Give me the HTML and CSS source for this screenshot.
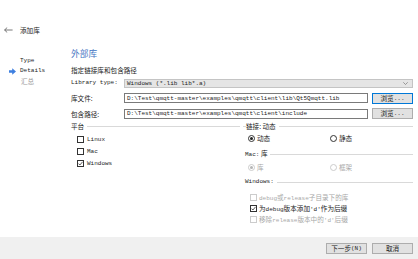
FILE: index.html
```html
<!DOCTYPE html>
<html>
<head>
<meta charset="utf-8">
<link rel="stylesheet" href="styles.css">
</head>
<body>
<div class="header">
  <svg class="back" width="9" height="6" viewBox="0 0 9 6"><path d="M0.6 3H8.6M3.2 0.5L0.6 3L3.2 5.5" fill="none" stroke="#555" stroke-width="0.8"/></svg>
  <span>添加库</span>
</div>
<div class="content">
  <div class="nav">
    <div class="nav-item"><span class="l">Type</span></div>
    <div class="nav-item active"><svg class="cur" width="7" height="7" viewBox="0 0 7 7"><path d="M0 2.2H3.2V0.2L7 3.5L3.2 6.8V4.8H0Z" fill="#3d7fe0"/></svg><span class="l">Details</span></div>
    <div class="nav-item muted">汇总</div>
  </div>
  <div class="main">
    <div class="title">外部库</div>
    <div class="subtitle">指定链接库和包含路径</div>
    <div class="form">
      <span class="label l">Library type:</span>
      <div class="combo"><span class="l">Windows (*.lib lib*.a)</span><svg class="chev" width="5" height="3" viewBox="0 0 5 3"><path d="M0.3 0.3L2.5 2.5L4.7 0.3" fill="none" stroke="#777" stroke-width="0.7"/></svg></div>
      <span class="label">库文件:</span>
      <div class="input l">D:\Test\qmqtt-master\examples\qmqtt\client\lib\Qt5Qmqtt.lib</div>
      <div class="btn focus">浏览<span class="l">...</span></div>
      <span class="label">包含路径:</span>
      <div class="input l">D:\Test\qmqtt-master\examples\qmqtt\client\include</div>
      <div class="btn">浏览<span class="l">...</span></div>
    </div>
    <div class="groups">
      <div class="group left">
        <div class="ghead"><span>平台</span><span class="line"></span></div>
        <div class="checks">
          <div class="check"><span class="cb"></span><span class="l">Linux</span></div>
          <div class="check"><span class="cb"></span><span class="l">Mac</span></div>
          <div class="check"><span class="cb"><svg width="5" height="5" viewBox="0 0 5 5"><path d="M0.5 2.6L1.9 4L4.6 0.8" fill="none" stroke="#333" stroke-width="0.8"/></svg></span><span class="l">Windows</span></div>
        </div>
      </div>
      <div class="group right">
        <div class="ghead"><span class="lead"></span><span>链接: 动态</span><span class="line"></span></div>
        <div class="radios r1">
          <div class="radio"><span class="rb on"></span><span>动态</span></div>
          <div class="radio"><span class="rb"></span><span>静态</span></div>
        </div>
        <div class="ghead sub h2"><span><span class="l">Mac:</span> 库</span><span class="line"></span></div>
        <div class="radios r2 disabled">
          <div class="radio"><span class="rb on"></span><span>库</span></div>
          <div class="radio"><span class="rb"></span><span>框架</span></div>
        </div>
        <div class="ghead sub h3"><span class="l">Windows:</span><span class="line"></span></div>
        <div class="wchecks">
          <div class="check disabled"><span class="cb"></span><span><span class="l">debug</span>或<span class="l">release</span>子目录下的库</span></div>
          <div class="check"><span class="cb"><svg width="5" height="5" viewBox="0 0 5 5"><path d="M0.5 2.6L1.9 4L4.6 0.8" fill="none" stroke="#333" stroke-width="0.8"/></svg></span><span>为<span class="l">debug</span>版本添加<span class="l">'d'</span>作为后缀</span></div>
          <div class="check disabled"><span class="cb"></span><span>移除<span class="l">release</span>版本中的<span class="l">'d'</span>后缀</span></div>
        </div>
      </div>
    </div>
  </div>
</div>
<div class="footer">
  <div class="btn fbtn">下一步<span class="l">(N)</span></div>
  <div class="btn fbtn">取消</div>
</div>
</body>
</html>
```

FILE: styles.css
```css
html, body {
  margin: 0;
  padding: 0;
}
body {
  width: 418px;
  height: 259px;
  display: flex;
  flex-direction: column;
  background: #ffffff;
  color: #222;
  font-family: "Noto Sans CJK SC", "Liberation Mono", sans-serif;
  font-size: 6.6px;
  overflow: hidden;
}
.l {
  font-family: "Liberation Mono", "Noto Sans CJK SC", monospace;
  font-size: 6px;
}
.header {
  margin-top: 19px;
  height: 22px;
  display: flex;
  align-items: center;
  padding-left: 4px;
  line-height: 8px;
}
.header .back {
  margin-right: 7px;
}
.content {
  flex: 1;
  display: flex;
}
.nav {
  width: 71px;
  padding-top: 15px;
  box-sizing: border-box;
}
.nav-item {
  height: 10px;
  line-height: 10px;
  display: flex;
  align-items: center;
  padding-left: 20px;
}
.nav-item.active {
  padding-left: 9px;
}
.nav-item .cur {
  margin-right: 4px;
}
.nav-item.muted {
  color: #9a9a9a;
  padding-left: 21px;
}
.main {
  flex: 1;
  padding-right: 5px;
  display: flex;
  flex-direction: column;
}
.title {
  margin-top: 8px;
  height: 10px;
  line-height: 10px;
  font-size: 8.7px;
  color: #3f74c2;
}
.subtitle {
  margin-top: 6px;
  height: 10px;
  line-height: 10px;
}
.form {
  margin-top: 3px;
  display: grid;
  grid-template-columns: 49px 1fr 41px;
  grid-template-rows: 10px 11px 11px;
  column-gap: 4px;
  row-gap: 4.5px;
  align-items: center;
}
.label {
  line-height: 10px;
}
.combo {
  grid-column: 2 / 4;
  height: 9px;
  box-sizing: border-box;
  background: #e5e5e5;
  border: 1px solid #c4c4c4;
  display: flex;
  align-items: center;
  justify-content: space-between;
  padding: 0 4px 0 2px;
}
.input {
  height: 10px;
  box-sizing: border-box;
  border: 1px solid #7a7a7a;
  display: flex;
  align-items: center;
  padding-left: 2px;
  white-space: nowrap;
  overflow: hidden;
}
.btn {
  height: 11px;
  box-sizing: border-box;
  background: #e1e1e1;
  border: 1px solid #adadad;
  display: flex;
  align-items: center;
  justify-content: center;
  line-height: 9px;
}
.btn.focus {
  border-color: #0078d7;
}
.groups {
  margin-top: 3px;
  display: flex;
  gap: 3px;
}
.group.left {
  width: 169px;
}
.group.right {
  flex: 1;
}
.ghead {
  height: 8px;
  display: flex;
  align-items: center;
  line-height: 8px;
}
.ghead .line {
  flex: 1;
  border-top: 1px solid #d9d9d9;
  margin-left: 3px;
}
.ghead .lead {
  width: 3px;
  border-top: 1px solid #d9d9d9;
  margin-right: 0px;
}
.ghead.sub {
  padding-left: 2px;
}
.checks {
  margin-top: 3.5px;
  padding-left: 6px;
}
.check {
  height: 12px;
  display: flex;
  align-items: center;
}
.cb {
  width: 7px;
  height: 7px;
  box-sizing: border-box;
  border: 1px solid #333;
  background: #fff;
  margin-right: 3px;
  display: flex;
  align-items: center;
  justify-content: center;
}
.check.disabled {
  color: #a8a8a8;
}
.check.disabled .cb {
  border-color: #cccccc;
}
.radios {
  display: grid;
  grid-template-columns: 82px 1fr;
  padding-left: 5px;
  height: 10px;
  align-items: center;
}
.radios.r1 {
  margin-top: 3px;
}
.radios.r2 {
  margin-top: 4px;
}
.ghead.h2 {
  margin-top: 7px;
}
.ghead.h3 {
  margin-top: 6px;
}
.radio {
  display: flex;
  align-items: center;
}
.rb {
  width: 7px;
  height: 7px;
  box-sizing: border-box;
  border: 1px solid #333;
  border-radius: 50%;
  margin-right: 2px;
  display: flex;
  align-items: center;
  justify-content: center;
}
.rb.on::after {
  content: "";
  width: 3px;
  height: 3px;
  border-radius: 50%;
  background: #222;
}
.radios.disabled {
  color: #a8a8a8;
}
.radios.disabled .rb {
  border-color: #cccccc;
}
.radios.disabled .rb.on::after {
  background: #b5b5b5;
}
.wchecks {
  margin-top: 5.5px;
  padding-left: 7px;
}
.wchecks .check {
  height: 11px;
}
.wchecks .cb {
  margin-right: 2px;
}
.footer {
  height: 22px;
  flex: none;
  background: #f0f0f0;
  display: flex;
  justify-content: flex-end;
  align-items: center;
  gap: 5px;
  padding-right: 5px;
}
.fbtn {
  width: 41px;
}
```
